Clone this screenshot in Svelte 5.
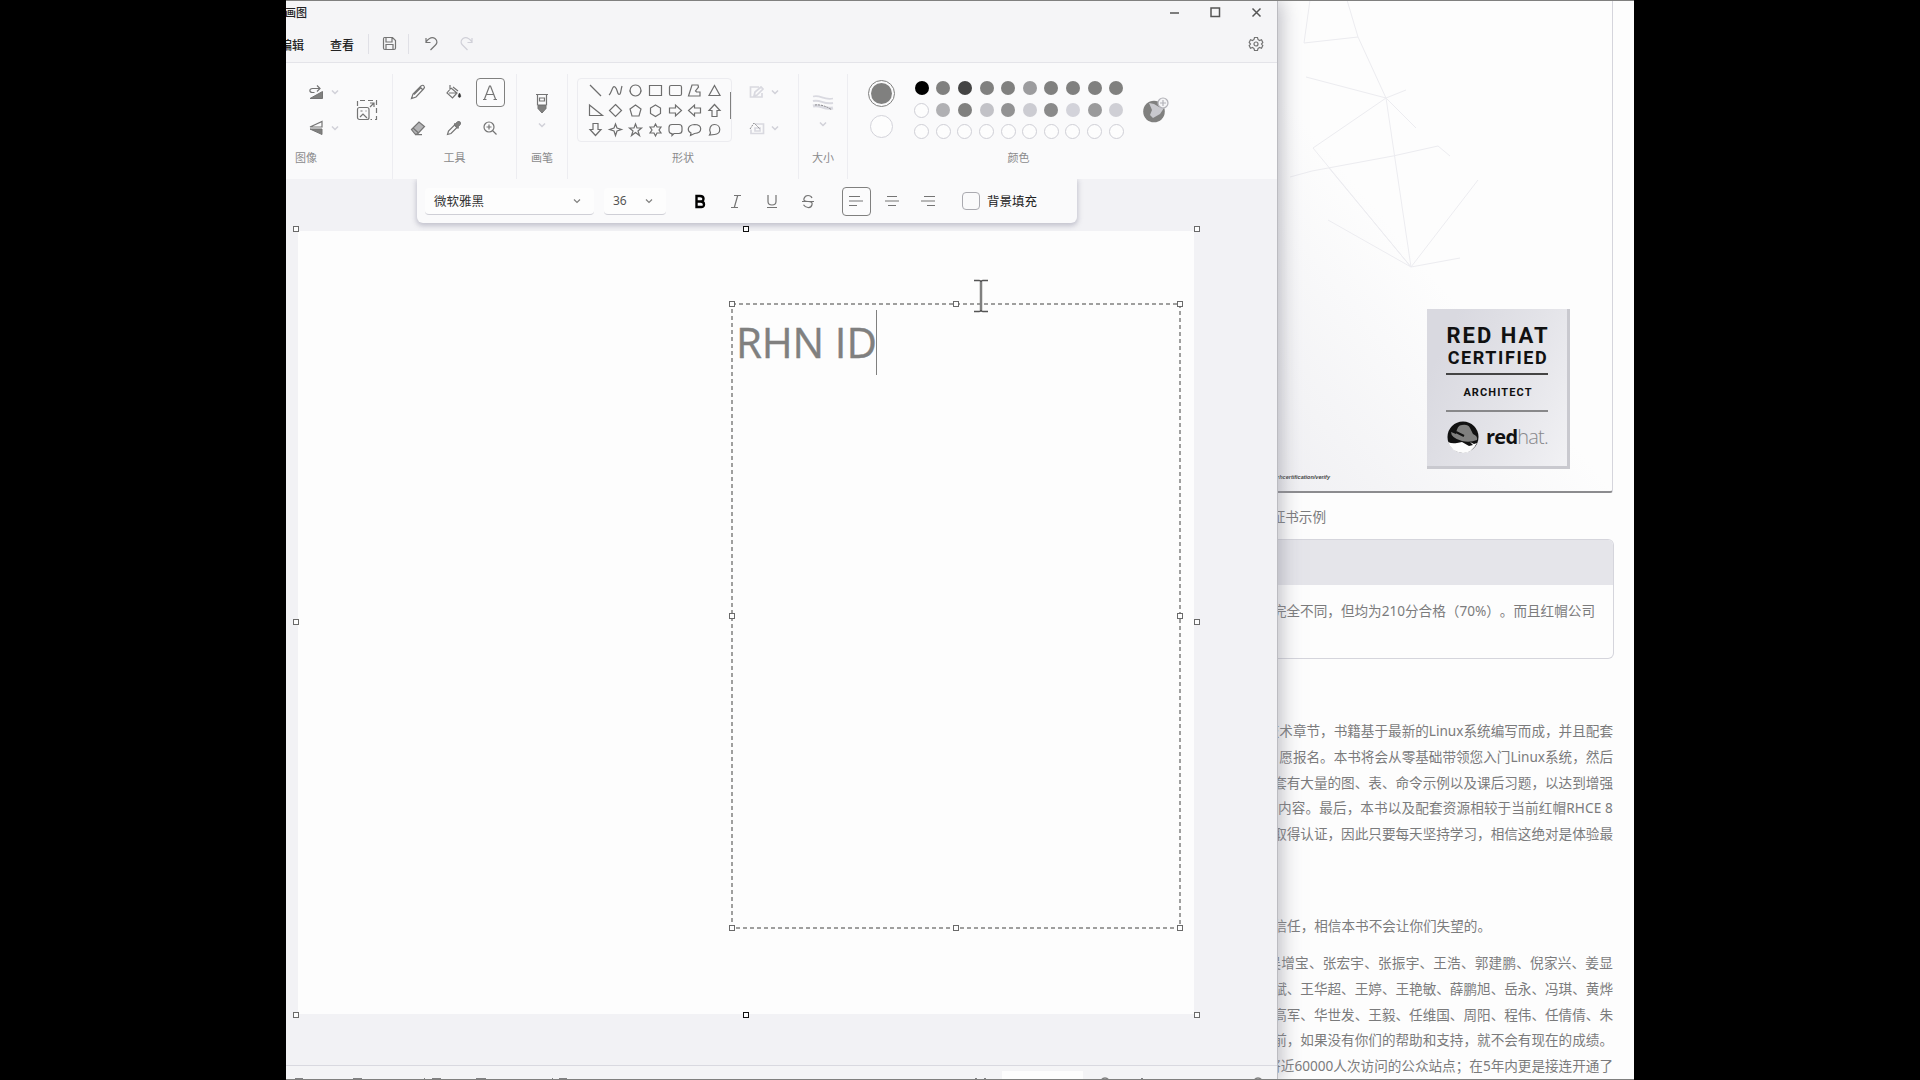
<script>
  const shapes = [
    'M2 2l11 11',
    'M1 12C4 10 4 2 7 4s2 9 5 7c1-1 1-5 2-8',
    'M7.5 2a5.5 5.5 0 1 0 .01 0z',
    'M1.500 2.500h12v10h-12z',
    'M3 2.500h9q1.500 0 1.500 1.500v7q0 1.500-1.500 1.500h-9q-1.500 0-1.500-1.500v-7q0-1.500 1.500-1.500z',
    'M1.500 13l3.500-11h6l.5 2-3 4 1 1h3.500v4z',
    'M7.500 2.500l5.500 10h-11z',
    'M1.500 2v10.500h13z',
    'M7.500 1.500l6 6-6 6-6-6z',
    'M7.500 2l5.500 4-2 7h-7l-2-7z',
    'M7.500 2l5 3v5.500l-5 3-5-3v-5.500z',
    'M1.500 5h6v-3l6 5.500-6 5.500v-3h-6z',
    'M13.500 5h-6v-3l-6 5.500 6 5.500v-3h6z',
    'M5 13.500v-6h-3l5.500-6 5.500 6h-3v6z',
    'M5 1.500v6h-3l5.500 6 5.500-6h-3v-6z',
    'M7.500 2l1.500 4 4.500 1.500-4.500 1.500-1.500 4.500-1.500-4.500-4.500-1.500 4.500-1.500z',
    'M7.500 2l1.500 4h4.500l-3.500 3 1.500 4.500-4-3-4 3 1.500-4.500-3.500-3h4.500z',
    'M7.500 2l1.500 3h4l-2 3 2 3h-4l-1.500 3-1.500-3h-4l2-3-2-3h4z',
    'M4 2.500h7q3 0 3 3v3q0 3-3 3h-5l-2 2v-2q-3 0-3-3v-3q0-3 3-3z',
    'M4 11c-4-2-4-8 3.500-8.500 8 0 8.500 8.500 0 9l-4 2z',
    'M3.500 11c-2-4 0-8.500 4-8.500 7 0 7 10 0 10l-5 .5z'
  ];
  const swatches = [
    '#000', '#80807f', '#444', '#80807f', '#80807f', '#9c9c9e', '#80807f', '#80807f', '#80807f', '#80807f',
    '#fdfdfd', '#b0b0b3', '#80807f', '#c2c2c7', '#929293', '#ccccd2', '#8a8a8a', '#d3d3da', '#9a9a9b', '#cfcfd5',
    '#fdfdfd', '#fdfdfd', '#fdfdfd', '#fdfdfd', '#fdfdfd', '#fdfdfd', '#fdfdfd', '#fdfdfd', '#fdfdfd', '#fdfdfd'
  ];
  const intro = [
    '技术章节，书籍基于最新的Linux系统编写而成，并且配套',
    '愿报名。本书将会从零基础带领您入门Linux系统，然后',
    '套有大量的图、表、命令示例以及课后习题，以达到增强',
    '内容。最后，本书以及配套资源相较于当前红帽RHCE 8',
    '取得认证，因此只要每天坚持学习，相信这绝对是体验最'
  ];
  const thanks = [
    '吴增宝、张宏宇、张振宇、王浩、郭建鹏、倪家兴、姜显',
    '斌、王华超、王婷、王艳敏、薛鹏旭、岳永、冯琪、黄烨',
    '高军、华世发、王毅、任维国、周阳、程伟、任倩倩、朱',
    '前，如果没有你们的帮助和支持，就不会有现在的成绩。',
    '将近60000人次访问的公众站点；在5年内更是接连开通了'
  ];
  const handles = ['tl', 'tc', 'tr', 'ml', 'mr', 'bl', 'bc', 'br'];
</script>

{#snippet chev(dark)}
  <svg class="chev" class:dark width="8" height="6" viewBox="0 0 8 6"><path d="M1 1.500l3 3 3-3" /></svg>
{/snippet}

<div class="screen">
  <div class="window">
    <header>
      <div class="title">
        <span class="app-name">画图</span>
        <div class="win-buttons">
          <svg width="11" height="11"><path d="M1 6h9" /></svg>
          <svg width="11" height="11"><rect x="1" y="1" width="8.500" height="8.500" /></svg>
          <svg width="11" height="11"><path d="M1.500 1.500l8 8m0-8l-8 8" /></svg>
        </div>
      </div>
      <div class="menu">
        <span class="edit">编辑</span>
        <span class="view">查看</span>
        <i class="sep"></i>
        <svg class="save" width="15" height="15"><path d="M2.500 1.500h8l3 3v7.500q0 1.500-1.500 1.500h-9q-1.500 0-1.500-1.500v-9q0-1.500 1-1.500zM4 2v4h6v-4M4 13v-4.500h7v4.500" /></svg>
        <i class="sep"></i>
        <svg class="undo" width="15" height="15"><path d="M2 2v4.500h4.500M2 6C5 2 8 0.500 11 2.500c3 2.500 2 5 .5 6.500l-5 5" /></svg>
        <svg class="redo" width="15" height="15"><path d="M13 2v4.500h-4.500M13 6C10 2 7 .5 4 2.500c-3 2.500-2 5-.5 6.500l5 5" /></svg>
        <svg class="gear" width="16" height="16"><path d="M6.500 1.500h3l.5 2 1.500 1 2-.7 1.300 2.600-1.300 1.600 1.300 1.600-1.300 2.600-2-.7-1.500 1-.5 2h-3l-.5-2-1.500-1-2 .7-1.300-2.600 1.300-1.600-1.300-1.600 1.300-2.600 2 .7 1.500-1z" /><circle cx="8" cy="8" r="2" /></svg>
      </div>
    </header>

    <div class="ribbon">
      <section class="g-image">
        <div class="body">
          <div class="cell"><svg width="16" height="16"><path d="M11.500 4.500H4.500C1 4.500 1 8.500 4.500 8.500h2M9 1.500l3 3-3 3" /><path class="fill" d="M2 14.500L14.500 7.500v7z" /></svg></div>
          <div class="cell">{@render chev(false)}</div>
          <div class="cell tall"><svg width="22" height="22"><path stroke-dasharray="5 3" d="M1.500 7v-5.500h19v19h-6" /><rect x="1.500" y="8.500" width="11.500" height="12" rx="2" /><path d="M4 18l3-3 4 4M14 8l4-4M14 4h4v4" /><path d="M4.500 12h2m3 0h1" /></svg></div>
          <div class="cell"><svg width="16" height="16"><path d="M14 1.500v5.500H2z" /><path class="fill" d="M14 14.500V9H2z" /></svg></div>
          <div class="cell">{@render chev(false)}</div>
        </div>
        <div class="label">图像</div>
      </section>

      <section class="g-tools">
        <div class="body">
          <div class="cell"><svg width="16" height="16"><path d="M1.500 14.500l1.500-4.500L11 2q2-1.500 3 0 1.200 1.500-.5 3L6 13zM10 3l3 3M4 10.500l7-7" /></svg></div>
          <div class="cell"><svg width="16" height="16"><path d="M5 4l6 5-4.500 5-5.500-5 4-5M4 1v5M3 9h7M7 3l5 4" /><path class="dark" d="M13.500 9q-2.500 4 0 4.500 2.500-.5 0-4.500z" /></svg></div>
          <div class="cell"><span class="chosen"><svg width="16" height="17"><path d="M2.500 15L7.500 2h1L13.500 15M4.500 10.500h7M1 15.500h3.500m7 0h3.500" /></svg></span></div>
          <div class="cell"><svg width="16" height="16"><path class="shade" d="M1.500 9.500L9 2l5.500 4.500L7.500 14H5z" /><path d="M3 8l5.500 5M5 14.700h7" /></svg></div>
          <div class="cell"><svg width="16" height="16"><path d="M1.500 14.500l1-3.500 6-6 2.500 2.500-6 6z" /><path class="fill" d="M8 4l1.500-.5L12 1.500q3-.5 2.500 2.500L12.500 6.500 12 8.500z" /></svg></div>
          <div class="cell"><svg width="16" height="16"><circle cx="7" cy="7" r="5" /><path d="M10.500 10.500l4 4M4.500 7h5M7 4.500v5" /></svg></div>
        </div>
        <div class="label">工具</div>
      </section>

      <section class="g-brush">
        <div class="body stack">
          <svg width="14" height="22"><path d="M1 1.500h12M2.500 2v10h9v-10M4.500 5h5v3h-5z" /><path class="fill" d="M3 12.500h8v3l-4 4.500-4-4.500z" /></svg>
          {@render chev(false)}
        </div>
        <div class="label">画笔</div>
      </section>

      <section class="g-shapes">
        <div class="body">
          <div class="gallery">
            {#each shapes as d}<svg width="15" height="15"><path {d} /></svg>{/each}
          </div>
          <i class="scroll"></i>
          <div class="opts">
            <div class="cell"><svg class="pale" width="16" height="14"><path d="M10 2H1.500v10H13V8M5 11l1-4 6-5 2 2-6 6z" /></svg></div>
            <div class="cell">{@render chev(false)}</div>
            <div class="cell"><svg class="pale" width="16" height="14"><path d="M6 3h8.500v9.500H2v-4M6 7h5v3H6z" /><path class="line" d="M1 8l4-6 6 6" /></svg></div>
            <div class="cell">{@render chev(false)}</div>
          </div>
        </div>
        <div class="label">形状</div>
      </section>

      <section class="g-size">
        <div class="body stack size-body">
          <svg class="pale" width="22" height="20"><path d="M1 2.500c8-2 10 4 20 2" /><path stroke-width="2" d="M1 7c8-2 10 4 20 2" /><path stroke-width="3" d="M1 12c8-2 10 4 20 2" /><path class="line" d="M3 11q8-1 17 5" /></svg>
          {@render chev(false)}
        </div>
        <div class="label">大小</div>
      </section>

      <section class="g-colour">
        <div class="body">
          <div class="current"><i class="primary"></i><i class="secondary"></i></div>
          <div class="palette">
            {#each swatches as c}<i class:empty={c === '#fdfdfd'} style:background={c}></i>{/each}
          </div>
          <svg class="wheel" width="28" height="28"><circle class="disc" cx="13" cy="15.500" r="10.800" /><path class="glow" d="M8 7l5 1 5 3 5 1-4 6-7 4-3-3 2-5z" /><circle class="plus" cx="22" cy="7" r="5" /><path class="line" d="M22 4v6m-3-3h6" /></svg>
        </div>
        <div class="label">颜色</div>
      </section>
    </div>

    <div class="workspace">
      <div class="textbar">
        <div class="select font"><span>微软雅黑</span>{@render chev(true)}</div>
        <div class="select size"><span>36</span>{@render chev(true)}</div>
        <div class="styles">
          <svg width="12" height="15"><path class="bold" d="M2.500 2h3.500q3.500 0 3.500 2.800T6 7.500H2.500zM2.500 7.500h4q3.500 0 3.500 3T6.500 13h-4z" /></svg>
          <svg width="14" height="15"><path d="M5 1.500h7M2 13.500h7M8.700 1.500l-3.400 12" /></svg>
          <svg width="12" height="15"><path d="M2 1v6.500q0 3.500 4 3.500t4-3.500V1M1 13.500h10" /></svg>
          <svg width="14" height="15"><path d="M11 4Q10 1.500 7 1.500T3 4.500t4 3 4 3.200-4 2.800-4.500-2.800M1 7.500h12" /></svg>
        </div>
        <div class="aligns">
          <span class="chosen"><svg width="16" height="14"><path d="M1 2.500h11M1 7h14M1 11.500h8" /></svg></span>
          <span><svg width="16" height="14"><path d="M3 2.500h10M1 7h14M4 11.500h8" /></svg></span>
          <span><svg width="16" height="14"><path d="M4 2.500h11M1 7h14M7 11.500h8" /></svg></span>
        </div>
        <i class="check"></i>
        <span class="bgfill">背景填充</span>
      </div>

      <div class="canvas">
        {#each handles as h}<i class="handle {h}"></i>{/each}
        <div class="textbox">
          <svg class="dashes" width="450" height="626"><rect x="1" y="1" width="448" height="624" /></svg>
          {#each handles as h}<i class="handle {h}"></i>{/each}
          <span class="typed">RHN ID</span><i class="caret"></i>
        </div>
        <svg class="ibeam" width="16" height="34"><path d="M1 1.500h5q2 0 2 2 0-2 2-2h5M1 32.500h5q2 0 2-2 0 2 2 2h5" /><path class="stem" d="M8 3v28" /></svg>
      </div>
    </div>

    <footer>
      <svg width="990" height="14">
        <rect class="zoombox" x="716" y="5" width="81" height="9" />
        <path d="M9 13h8M67 13h9M138 13h1M146 13h9M190 13h10M266 13h1M273 13h8M689 13h2M698 13h2M855 13h2" />
        <path class="soft" d="M815 14q4-4 8 0M968 14q4-4 8 0" />
      </svg>
    </footer>
  </div>

  <div class="page">
    <div class="certificate">
      <svg class="mesh" width="335" height="490">
        <path d="M32 0L26 43 80 37 108 98M69 0l11 37M28 77l80 21-73 50 98 119M108 98l25 169 67-87M12 177l22-6 81-15 45-10 12 10M51 168l82 99 49-9M50 220l83 47M108 98l30 30M108 98l20-8" />
      </svg>
      <div class="fineprint">/rights/verify/rhcertification/verify</div>
      <div class="badge">
        <b class="rh">RED HAT</b>
        <b class="cert">CERTIFIED</b>
        <hr />
        <b class="arch">ARCHITECT</b>
        <hr class="thin" />
        <div class="brand">
          <svg width="32" height="32"><circle cx="16" cy="16" r="15.500" /><path class="face" d="M1 21q4 2 9 1l5-1 7 4 4-1-3-3 4 2 3-1q-5 10-14 10Q4 31 1 21z" /><path class="hat" d="M4 11l5 2Q10 4 15 4q6-1 8 3l3 6q5 2 4 6-7 3-15 1Q4 17 4 11z" /><path class="band" d="M9 11l8 4" /></svg>
          <span><b>red</b>hat.</span>
        </div>
      </div>
    </div>
    <div class="row caption">证书示例</div>
    <div class="note">
      <div class="note-head"></div>
      <div class="row">完全不同，但均为210分合格（70%）。而且红帽公司</div>
    </div>
    <div class="intro">{#each intro as t}<div class="row">{t}</div>{/each}</div>
    <div class="row trust">信任，相信本书不会让你们失望的。</div>
    <div class="thanks">{#each thanks as t}<div class="row">{t}</div>{/each}</div>
  </div>
  <i class="edge top"></i>
  <i class="edge bottom"></i>
</div>

<style>
  :global(body) { background: #000; overflow: hidden; }
  .screen, .screen :global(*) { box-sizing: border-box; }
  .screen {
    position: relative; display: flex; width: 1348px; height: 1080px; margin-left: 286px;
    overflow: hidden; background: #fdfdfd; color: #333;
    font: 12px "Noto Sans", "Noto Sans CJK SC", sans-serif;
  }
  .edge { position: absolute; left: 0; width: 100%; height: 1px; background: #80807f; z-index: 3; }
  .edge.top { top: 0; }
  .edge.bottom { bottom: 0; }
  i { display: block; flex: none; }
  svg { display: block; flex: none; fill: none; stroke: #747474; stroke-width: 1.2; overflow: visible; }
  svg .fill { fill: #80807f; stroke-width: 1; }
  svg .dark { fill: #333; stroke: #333; stroke-width: .5; }
  svg .shade { fill: #b4b4b6; }
  .chev { stroke: #d0d0d8; stroke-width: 1.5; }
  .chev.dark { stroke: #80807f; stroke-width: 1.2; }
  svg.pale { stroke: #d9d9e0; stroke-width: 1.700; }
  svg.pale .line { stroke: #8a8a8d; stroke-width: 1; stroke-dasharray: 2 1; }

  .window {
    position: relative; z-index: 2; display: flex; flex: none; flex-direction: column; width: 992px; height: 1080px;
    border-right: 1px solid #bcbcc1; background: #f2f2f5; box-shadow: 2px 0 20px #8888949c;
  }
  header { height: 62px; background: #f5f5f7; }
  .title { display: flex; justify-content: space-between; align-items: center; height: 24px; overflow: hidden; }
  .app-name { margin-left: -1px; color: #222; font-size: 11px; font-weight: 500; }
  .win-buttons { display: flex; gap: 30px; margin-right: 15px; }
  .win-buttons svg { stroke: #555; stroke-width: 1.500; }
  .menu { display: flex; align-items: center; height: 38px; padding-top: 1px; overflow: hidden; color: #222; font-weight: 500; }
  .edit { margin: 2px 0 0 -6px; }
  .view { margin: 2px 14px 0 26px; }
  .sep { width: 1px; height: 20px; background: #e0e0e6; }
  .save { margin: 0 11px 0 13px; }
  .undo { margin: 0 20px 0 15px; }
  .redo { stroke: #d0d0d8; }
  .gear { margin: 0 13px 0 auto; }

  .ribbon { display: flex; height: 117px; padding-top: 11px; border-top: 1px solid #e4e4e9; background: #fafafb; }
  section { flex: none; border-right: 1px solid #ededf1; height: 105px; }
  .body { display: flex; height: 72px; }
  .label { height: 24px; line-height: 24px; text-align: center; color: #8a8a8c; font-size: 11px; }
  .cell { display: flex; align-items: center; justify-content: center; }
  .g-image { width: 107px; }
  .g-image .body { display: grid; grid-template-columns: 20px 18px 46px; grid-template-rows: 36px 36px; padding-left: 20px; }
  .g-image .tall { grid-row: 1 / 3; grid-column: 3; }
  .g-image .label { width: 40px; }
  .g-tools { width: 124px; }
  .g-tools .body { display: grid; grid-template-columns: repeat(3, 36px); grid-template-rows: 36px 36px; padding-left: 7px; }
  .chosen { display: flex; align-items: center; justify-content: center; width: 29px; height: 29px; border: 1px solid #80807f; border-radius: 4px; background: #fbfbfc; }
  .g-brush { width: 51px; }
  .body.stack { flex-direction: column; align-items: center; justify-content: center; gap: 7px; }
  .size-body svg:first-child { margin-top: 1px; }
  .g-shapes { width: 231px; }
  .g-shapes .body { align-items: center; padding-left: 9px; }
  .gallery {
    display: grid; flex: none; grid-template-columns: repeat(7, 19.800px); grid-auto-rows: 19.700px; align-content: center; justify-items: center; align-items: center;
    width: 155px; height: 64px; padding-left: 8px; border: 1px solid #ececf0; border-radius: 4px;
  }
  .gallery svg { stroke: #6e6e6e; }
  .scroll { width: 1px; height: 27px; margin: -10px 16px 0 -2px; background: #80807f; }
  .opts { display: grid; grid-template-columns: 20px 16px; grid-template-rows: 36px 36px; }
  .g-size { width: 49px; }
  .g-colour { width: 341px; border: 0; }
  .g-colour .body { align-items: center; padding-left: 20px; }
  .current { display: flex; flex-direction: column; align-items: center; gap: 8px; width: 27px; margin-top: -3px; }
  .primary { width: 27px; height: 27px; border: 1.500px solid #80807f; border-radius: 50%; padding: 2px; background: #80807f content-box; background-clip: content-box; }
  .secondary { width: 23px; height: 23px; border: 1.500px solid #d3d3da; border-radius: 50%; background: #fdfdfd; }
  .palette { display: grid; grid-template-columns: repeat(10, 21.600px); grid-auto-rows: 21.700px; place-items: center; margin-left: 16px; }
  .palette i { width: 14px; height: 14px; border-radius: 50%; }
  .palette .empty { width: 15px; height: 15px; border: 1.500px solid #cfcfd6; }
  .wheel { margin-left: 14px; }
  .wheel .disc { fill: #80807f; stroke: none; }
  .wheel .glow { fill: #c9c9ce; stroke: none; }
  .wheel .plus { fill: #f4f4f6; stroke: #b2b2b8; }
  .wheel .line { stroke: #b2b2b8; }

  .workspace { flex: 1; padding-left: 12px; background: #f2f2f5; }
  .textbar {
    display: flex; align-items: center; width: 660px; height: 44px; margin: 0 0 8px 119px; padding-left: 8px;
    border-radius: 0 0 6px 6px; background: #fafafb; box-shadow: 0 2px 5px 1px #b8b8c4cc; clip-path: inset(0 -12px -14px -12px);
  }
  .select { display: flex; flex: none; align-items: center; height: 27px; border-bottom: 1px solid #cfcfd6; border-radius: 4px; background: #fdfdfd; color: #555; }
  .select span { flex: 1; padding-left: 9px; }
  .font { width: 169px; }
  .font :global(.chev) { margin-right: 13px; }
  .size { width: 62px; margin-left: 10px; }
  .size :global(.chev) { margin-right: 13px; }
  .font span { color: #333; font-size: 12.500px; }
  .styles { display: grid; grid-template-columns: repeat(4, 36px); place-items: center; margin-left: 16px; }
  .styles .bold { stroke: #000; stroke-width: 2.400; }
  .aligns { display: grid; grid-template-columns: repeat(3, 36px); place-items: center; margin-left: 12px; }
  .check { width: 18px; height: 18px; margin-left: 16px; border: 1px solid #aaaab0; border-radius: 4px; }
  .bgfill { margin: -2px 0 0 7px; color: #222; font-size: 12.500px; }

  .canvas { position: relative; width: 896px; height: 783px; background: #fdfdfd; }
  .handle { position: absolute; width: 6px; height: 6px; border: 1.500px solid #6a6a6a; background: #fdfdfd; }
  .canvas > .tl, .canvas > .ml, .canvas > .bl { left: -5px; }
  .canvas > .tc, .canvas > .bc { left: 445px; border-color: #111; }
  .canvas > .tr, .canvas > .mr, .canvas > .br { right: -6px; }
  .canvas > .tl, .canvas > .tc, .canvas > .tr { top: -5px; }
  .canvas > .ml, .canvas > .mr { top: 388px; }
  .canvas > .bl, .canvas > .bc, .canvas > .br { bottom: -4px; }
  .textbox { position: absolute; left: 433px; top: 72px; width: 450px; height: 626px; display: flex; }
  .dashes { position: absolute; left: 0; top: 0; stroke: #80807f; stroke-width: 1.500; stroke-dasharray: 4 3; }
  .textbox .tl, .textbox .ml, .textbox .bl { left: -2px; }
  .textbox .tc, .textbox .bc { left: 222px; }
  .textbox .tr, .textbox .mr, .textbox .br { right: -2px; }
  .textbox .tl, .textbox .tc, .textbox .tr { top: -2px; }
  .textbox .ml, .textbox .mr { top: 310px; }
  .textbox .bl, .textbox .bc, .textbox .br { bottom: -2px; }
  .typed { margin: 10px 0 0 5px; color: #80807f; font: 42px/57px "Open Sans", "Noto Sans", sans-serif; letter-spacing: -.15px; white-space: pre; -webkit-text-stroke: .4px #80807f; }
  .caret { width: 1px; height: 65px; margin: 7px 0 0 -1px; background: #80807f; }
  .ibeam { position: absolute; left: 675px; top: 48px; stroke: #555; stroke-width: 1.500; }
  .ibeam .stem { stroke: #80807f; stroke-width: 2.500; }

  footer { height: 15px; border-top: 1px solid #d9d9e0; background: #f4f4f6; }
  footer svg { stroke: #111; }
  .zoombox { fill: #fdfdfd; stroke: none; }
  footer .soft { stroke: #80807f; }

  .page { position: relative; flex: 1; min-width: 0; overflow: hidden; color: #7b7b7c; font-size: 13.600px; text-spacing-trim: space-all; }
  .certificate {
    position: relative; display: flex; justify-content: flex-end; align-items: flex-start; width: 335px; height: 493px; padding: 309px 42px 0 0;
    border-right: 1px solid #d5d5dc; border-bottom: 2px solid #8c8c8f; border-radius: 0 0 3px 0;
    background: linear-gradient(50deg, #f0f0f3 0, #fdfdfd 45%);
  }
  .mesh { position: absolute; left: 0; top: 0; stroke: #ececf0; stroke-width: 1; }
  .fineprint { position: absolute; right: 282px; top: 473px; color: #444; font: italic bold 5.500px/8px "Liberation Sans", sans-serif; white-space: nowrap; }
  .badge {
    display: flex; flex-direction: column; align-items: center; width: 143px; height: 160px; padding-top: 17px;
    border-right: 3px solid #c9c9cf; border-bottom: 3px solid #c9c9cf;
    background: linear-gradient(115deg, #d9d9e0 15%, #e3e3e8 55%, #f1f1f4); color: #111; position: relative;
    font-family: Roboto, sans-serif; white-space: nowrap;
  }
  .rh { margin-left: 2px; font-size: 22px; line-height: 20px; letter-spacing: 2px; }
  .cert { margin-left: 2px; font-size: 18px; line-height: 23px; letter-spacing: 1.600px; }
  hr { width: 102px; height: 2px; margin: 4px 0 0; border: 0; background: #444; }
  .arch { margin: 9px 0 0 2px; font-size: 11px; line-height: 18px; letter-spacing: 1.100px; }
  hr.thin { margin-top: 8px; background: #88888a; height: 1.500px; }
  .brand { display: flex; align-items: center; gap: 7px; margin: 9px 0 0 1px; font: 20px/30px "Open Sans", sans-serif; letter-spacing: -.8px; }
  .brand span { color: #88888b; font-weight: 300; }
  .brand b { color: #111; font-weight: 700; }
  .brand svg { fill: #111; stroke: none; }
  .brand .face { fill: #fdfdfd; }
  .brand .hat { fill: #80807f; }
  .brand .band { stroke: #111; stroke-width: 2; }
  .row { display: flex; justify-content: flex-end; height: 25.850px; line-height: 25.850px; white-space: nowrap; }
  .caption { width: 48px; margin-top: 11px; }
  .note { width: 336px; height: 120px; margin-top: 9px; border: 1.500px solid #d5d5dc; border-left: 0; border-radius: 0 6px 6px 0; }
  .note-head { height: 45px; background: #e5e5ea; border-radius: 0 5px 0 0; }
  .note .row { margin-top: 13px; padding-right: 18px; }
  .intro { width: 335px; margin-top: 59px; }
  .intro .row:nth-child(4) { letter-spacing: .13px; }
  .trust { width: 213px; margin-top: 66px; }
  .thanks { width: 335px; margin-top: 11px; }
  .thanks .row:first-child { letter-spacing: .23px; }
</style>
